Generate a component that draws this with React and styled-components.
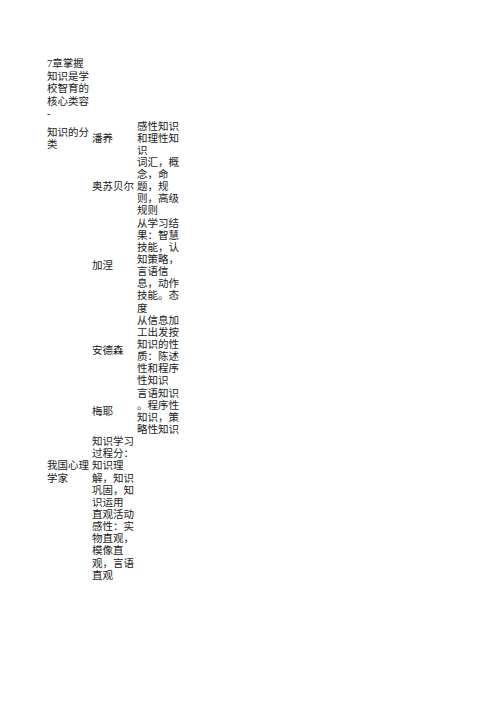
import React from "react";
import styled, { createGlobalStyle } from "styled-components";

const GlobalStyle = createGlobalStyle`
  html, body {
    margin: 0;
    padding: 0;
    background: #fff;
  }
`;

const Page = styled.div`
  padding: 58px 0 0 47px;
  font-family: "Liberation Serif", "Noto Sans CJK SC", serif;
  font-size: 10.5px;
  color: #1a1a1a;
`;

const Table = styled.div`
  display: grid;
  grid-template-columns: 45px 45px 45px;
`;

const Cell = styled.div`
  grid-column: ${(p) => p.col};
  align-self: center;
  white-space: nowrap;
`;

const Line = styled.div`
  height: ${(p) => p.lh}px;
  line-height: ${(p) => p.lh}px;
`;

const rows = [
  { lh: 12.5, c1: ["7章掌握", "知识是学", "校智育的", "核心类容", "-"] },
  { c1: ["知识的分", "类"], c2: ["潘养"], c3: ["感性知识", "和理性知", "识"] },
  { c2: ["奥苏贝尔"], c3: ["词汇，概", "念，命", "题，规", "则，高级", "规则"] },
  {
    c2: ["加涅"],
    c3: ["从学习结", "果：智慧", "技能，认", "知策略，", "言语信", "息，动作", "技能。态", "度"],
  },
  { c2: ["安德森"], c3: ["从信息加", "工出发按", "知识的性", "质：陈述", "性和程序", "性知识"] },
  { c2: ["梅耶"], c3: ["言语知识", "。程序性", "知识，策", "略性知识"] },
  {
    c1: ["我国心理", "学家"],
    c2: ["知识学习", "过程分：", "知识理", "解，知识", "巩固，知", "识运用"],
  },
  { c2: ["直观活动", "感性：实", "物直观，", "模像直", "观，言语", "直观"] },
];

function TextCell({ col, lines, row, lh }) {
  if (!lines) return null;
  return (
    <Cell col={col} style={{ gridRow: row }}>
      {lines.map((l, i) => (
        <Line key={i} lh={lh}>
          {l}
        </Line>
      ))}
    </Cell>
  );
}

export default function App() {
  return (
    <>
      <GlobalStyle />
      <Page>
        <Table>
          {rows.map((r, i) => {
            const lh = r.lh || 12.15;
            return (
              <React.Fragment key={i}>
                <TextCell col={1} row={i + 1} lh={lh} lines={r.c1} />
                <TextCell col={2} row={i + 1} lh={lh} lines={r.c2} />
                <TextCell col={3} row={i + 1} lh={lh} lines={r.c3} />
              </React.Fragment>
            );
          })}
        </Table>
      </Page>
    </>
  );
}
